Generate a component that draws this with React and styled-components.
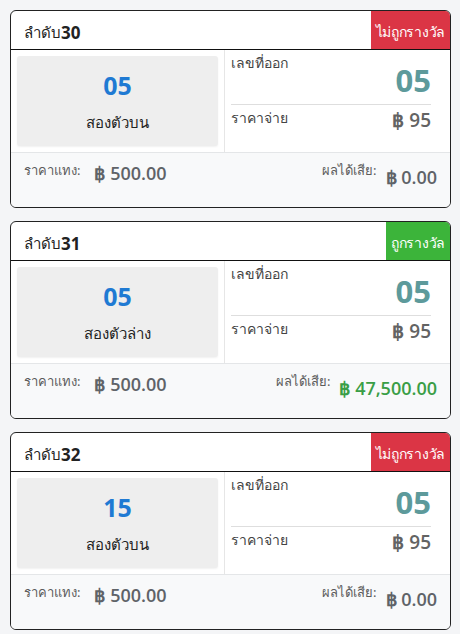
import React from "react";
import styled, { createGlobalStyle } from "styled-components";

const GlobalStyle = createGlobalStyle`
  html, body {
    margin: 0;
    padding: 0;
    background: #f4f5f7;
    font-family: "Noto Sans", "Open Sans", sans-serif;
  }
`;

const tickets = [
  { id: 30, number: "05", type: "สองตัวบน", drawn: "05", rate: "95", stake: "500.00", result: "0.00", win: false },
  { id: 31, number: "05", type: "สองตัวล่าง", drawn: "05", rate: "95", stake: "500.00", result: "47,500.00", win: true },
  { id: 32, number: "15", type: "สองตัวบน", drawn: "05", rate: "95", stake: "500.00", result: "0.00", win: false },
];

function TicketCard({ t }) {
  return (
    <Card>
      <Header>
        <Title>
          ลำดับ<strong>{t.id}</strong>
        </Title>
        <Badge $win={t.win}>{t.win ? "ถูกรางวัล" : "ไม่ถูกรางวัล"}</Badge>
      </Header>
      <Body>
        <LeftCell>
          <NumberBox>
            <BetNumber>{t.number}</BetNumber>
            <BetType>{t.type}</BetType>
          </NumberBox>
        </LeftCell>
        <RightCell>
          <InfoRow $top>
            <InfoLabel>เลขที่ออก</InfoLabel>
            <DrawnNumber>{t.drawn}</DrawnNumber>
          </InfoRow>
          <InfoRow>
            <InfoLabel>ราคาจ่าย</InfoLabel>
            <Rate>฿ {t.rate}</Rate>
          </InfoRow>
        </RightCell>
      </Body>
      <Footer>
        <FooterItem>
          <FooterLabel>ราคาแทง:</FooterLabel>
          <Amount>฿ {t.stake}</Amount>
        </FooterItem>
        <FooterItem $right>
          <FooterLabel>ผลได้เสีย:</FooterLabel>
          <Amount $result $win={t.win}>฿ {t.result}</Amount>
        </FooterItem>
      </Footer>
    </Card>
  );
}

export default function App() {
  return (
    <>
      <GlobalStyle />
      <Page>
        {tickets.map((t) => (
          <TicketCard key={t.id} t={t} />
        ))}
      </Page>
    </>
  );
}

const Page = styled.div`
  width: 460px;
  min-height: 634px;
  box-sizing: border-box;
  padding: 10px 9px 0 10px;
  display: flex;
  flex-direction: column;
  gap: 13px;
`;

const Card = styled.div`
  background: #fff;
  border: 1px solid #222;
  border-radius: 6px;
  overflow: hidden;
`;

const Header = styled.div`
  height: 38px;
  border-bottom: 1px solid #111;
  display: flex;
  justify-content: space-between;
  align-items: stretch;
`;

const Title = styled.div`
  display: flex;
  align-items: center;
  padding: 5px 0 0 13px;
  font-size: 15px;
  color: #222;

  strong {
    font-family: "Open Sans", sans-serif;
    font-weight: 700;
    font-size: 17px;
  }
`;

const Badge = styled.div`
  display: flex;
  align-items: center;
  padding: 4px 5px 0;
  font-size: 14px;
  letter-spacing: -0.3px;
  color: #fff;
  background: ${(p) => (p.$win ? "#3cb43a" : "#db3545")};
`;

const Body = styled.div`
  display: grid;
  grid-template-columns: 214px 1fr;
  height: 102px;
`;

const LeftCell = styled.div`
  padding: 6px;
  border-right: 1px solid #e6e6e6;
`;

const NumberBox = styled.div`
  height: 100%;
  background: #eeeeee;
  border-radius: 3px;
  box-shadow: 0 1px 2px rgba(0, 0, 0, 0.06);
  display: flex;
  flex-direction: column;
  align-items: center;
  justify-content: center;
  gap: 11px;
  padding-top: 2px;
  box-sizing: border-box;
`;

const BetNumber = styled.div`
  font-family: "Open Sans", sans-serif;
  font-weight: 700;
  font-size: 25px;
  line-height: 30px;
  color: #1f7ad3;
`;

const BetType = styled.div`
  font-size: 15px;
  font-weight: 500;
  color: #222;
`;

const RightCell = styled.div`
  padding: 2px 19px 0 6px;
  display: flex;
  flex-direction: column;
`;

const InfoRow = styled.div`
  display: flex;
  justify-content: space-between;
  align-items: flex-start;
  height: ${(p) => (p.$top ? "52px" : "auto")};
  border-bottom: ${(p) => (p.$top ? "1px solid #dedede" : "none")};
  padding-top: ${(p) => (p.$top ? "0" : "2px")};
`;

const InfoLabel = styled.div`
  font-size: 14px;
  color: #444;
  line-height: 22px;
`;

const DrawnNumber = styled.div`
  font-family: "Open Sans", sans-serif;
  font-weight: 700;
  font-size: 31px;
  line-height: 40px;
  margin-top: 8px;
  color: #5d9a9b;
`;

const Rate = styled.div`
  font-family: "Open Sans", sans-serif;
  font-weight: 600;
  font-size: 19px;
  line-height: 26px;
  color: #636363;
`;

const Footer = styled.div`
  height: 54px;
  background: #f8f9fa;
  border-top: 1px solid #e4e6e8;
  display: flex;
  justify-content: space-between;
  align-items: flex-start;
  padding: 0 13px;
`;

const FooterItem = styled.div`
  display: flex;
  align-items: flex-start;
  gap: ${(p) => (p.$right ? "9px" : "14px")};
  padding-top: 7px;
`;

const FooterLabel = styled.div`
  font-size: 13px;
  line-height: 20px;
  color: #5c5c5c;
`;

const Amount = styled.div`
  font-family: "Open Sans", sans-serif;
  font-weight: 600;
  font-size: 18px;
  line-height: 26px;
  margin-top: ${(p) => (p.$result ? "4px" : "0")};
  color: ${(p) => (p.$win ? "#3a9e46" : "#5f6368")};
`;
